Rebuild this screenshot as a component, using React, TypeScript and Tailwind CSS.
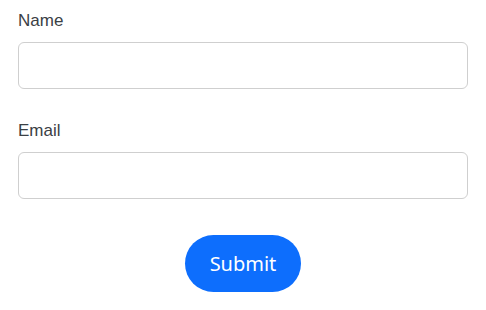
import React, { useState } from "react";

const Field = ({ label, type }: { label: string; type: string }) => {
  const [value, setValue] = useState<string>("");
  return (
    <div className="flex flex-col">
      <label className="h-[20px] text-[17px] leading-[20px] text-[#3b4045]">{label}</label>
      <input
        type={type}
        value={value}
        onChange={(e) => setValue(e.target.value)}
        className="mt-[11px] h-[47px] w-full rounded-[6px] border border-[#cfcfcf] bg-white px-3 outline-none"
      />
    </div>
  );
};

const App = () => {
  return (
    <div
      className="h-[310px] w-[486px] bg-white px-[18px] pt-[11px]"
      style={{ fontFamily: '"Liberation Sans", Arial, sans-serif' }}
    >
      <div className="flex flex-col gap-[32px]">
        <Field label="Name" type="text" />
        <Field label="Email" type="email" />
      </div>
      <div className="mt-[36px] flex justify-center">
        <button className="h-[57px] w-[116px] rounded-full bg-[#0d6efd] font-['Noto_Sans',sans-serif] text-[20px] text-white">
          Submit
        </button>
      </div>
    </div>
  );
};

export default App;
